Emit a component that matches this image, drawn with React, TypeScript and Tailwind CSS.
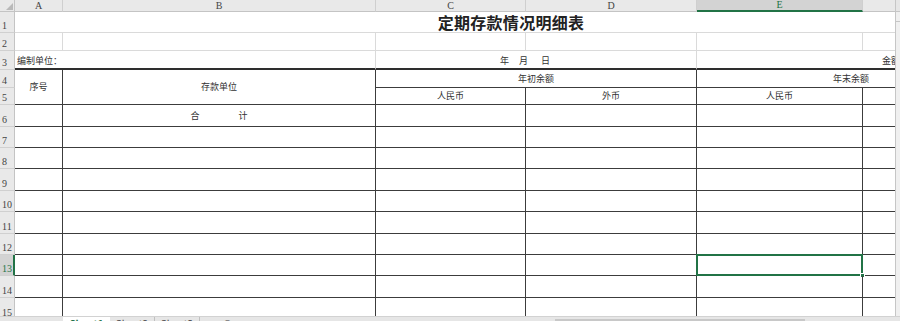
import type { ReactNode } from 'react'

const rowNums = Array.from({ length: 15 }, (_, i) => i + 1)

function RowHead({ n }: { n: number }) {
  const active = n === 13
  return (
    <div
      className={`flex items-end pl-[2px] pb-[1px] text-[10px] leading-none border-b border-b-[#d0d0d0] ${
        active
          ? 'bg-[#d3d3d3] text-[#217346] border-r-2 border-r-[#217346]'
          : 'bg-[#e9e9e9] text-[#444] border-r border-r-[#c4c4c4]'
      }`}
      style={{ fontFamily: '"Liberation Serif", serif' }}
    >
      {n}
    </div>
  )
}

function Cell({ className = '', children }: { className?: string; children?: ReactNode }) {
  return (
    <div className={`flex items-center min-w-0 overflow-hidden whitespace-nowrap text-[9px] text-[#333] ${className}`}>
      {children}
    </div>
  )
}

// black table border / light gridline
const KR = 'border-r border-r-[#3c3c3c]'
const KB = 'border-b border-b-[#3c3c3c]'
const GR = 'border-r border-r-[#dadada]'
const GB = 'border-b border-b-[#dadada]'

function ColHead({ label, active, last }: { label: string; active?: boolean; last?: boolean }) {
  return (
    <div
      className={`flex items-center justify-center text-[10px] leading-none ${last ? '' : 'border-r border-r-[#cfcfcf]'} ${
        active
          ? 'bg-[#d3d3d3] text-[#217346] border-b-2 border-b-[#217346]'
          : 'bg-[#e9e9e9] text-[#444] border-b border-b-[#c4c4c4]'
      }`}
      style={{ fontFamily: '"Liberation Serif", serif' }}
    >
      {label}
    </div>
  )
}

export default function App() {
  return (
    <div
      className="w-[900px] h-[321px] overflow-hidden bg-white flex flex-col"
      style={{ fontFamily: '"Noto Sans CJK SC", "Noto Sans", sans-serif' }}
    >
      <div className="h-[316px] flex overflow-hidden shrink-0">
        <div className="w-[895px] grid grid-cols-[15px_48px_313px_150px_171px_166px_32px] grid-rows-[12px_21px_18px_19px_18px_17px_22px_21px_21px_22px_21px_22px_21px_21px_22px_22px]">
          {/* column headers */}
          <div className="relative bg-[#e9e9e9] border-r border-r-[#c4c4c4] border-b border-b-[#c4c4c4]">
            <svg className="absolute right-[1px] bottom-[1px]" width="7" height="7" viewBox="0 0 7 7">
              <path d="M7 0 L7 7 L0 7 Z" fill="#b9b9b9" />
            </svg>
          </div>
          <ColHead label="A" />
          <ColHead label="B" />
          <ColHead label="C" />
          <ColHead label="D" />
          <ColHead label="E" active />
          <ColHead label="" last />

          {/* row 1 */}
          <RowHead n={1} />
          <div className={`col-span-6 flex items-center justify-center pl-[112px] ${GB}`}>
            <span className="text-[16px] leading-[20px] font-bold text-[#222] tracking-[0.3px] whitespace-nowrap">定期存款情况明细表</span>
          </div>

          {/* row 2 */}
          <RowHead n={2} />
          <Cell className={`${GR} ${GB}`} />
          <Cell className={`${GR} ${GB}`} />
          <Cell className={`${GR} ${GB}`} />
          <Cell className={`${GR} ${GB}`} />
          <Cell className={`${GR} ${GB}`} />
          <Cell className={GB} />

          {/* row 3 */}
          <RowHead n={3} />
          <Cell className={`col-span-2 pl-[2px] pt-[3px] ${GR} border-b-2 border-b-[#2e2e2e]`}>编制单位：</Cell>
          <Cell className={`col-span-2 pl-[124px] pt-[3px] gap-[10px] ${GR} border-b-2 border-b-[#2e2e2e]`}>
            <span>年</span>
            <span>月</span>
            <span className="ml-[3px]">日</span>
          </Cell>
          <Cell className="col-span-2 pl-[185px] pt-[3px] border-b-2 border-b-[#2e2e2e]">金额单位：元</Cell>

          {/* rows 4-5 header */}
          <RowHead n={4} />
          <Cell className={`row-span-2 justify-center ${KR} ${KB}`}>序号</Cell>
          <Cell className={`row-span-2 justify-center ${KR} ${KB}`}>存款单位</Cell>
          <Cell className={`col-span-2 justify-center ${KR} ${KB}`}>年初余额</Cell>
          <Cell className={`col-span-2 pl-[136px] ${KB}`}>年末余额</Cell>

          <RowHead n={5} />
          <Cell className={`justify-center ${KR} ${KB}`}>人民币</Cell>
          <Cell className={`justify-center ${KR} ${KB}`}>外币</Cell>
          <Cell className={`justify-center ${KR} ${KB}`}>人民币</Cell>
          <Cell className={KB} />

          {/* rows 6-15 */}
          {rowNums.slice(5).map((n) => (
            <div key={n} className="contents">
              <RowHead n={n} />
              <Cell className={`${KR} ${KB}`} />
              <Cell className={`justify-center ${KR} ${KB}`}>
                {n === 6 && (
                  <span className="flex gap-[39px]">
                    <span>合</span>
                    <span>计</span>
                  </span>
                )}
              </Cell>
              <Cell className={`${KR} ${KB}`} />
              <Cell className={`${KR} ${KB}`} />
              <div className={`relative ${KR} ${KB}`}>
                {n === 13 && (
                  <>
                    <div className="absolute -left-[1px] -top-[1px] -right-[1px] -bottom-[1px] border-2 border-[#217346]" />
                    <div className="absolute -right-[3px] -bottom-[3px] w-[5px] h-[5px] bg-[#217346] border border-white" />
                  </>
                )}
              </div>
              <Cell className={KB} />
            </div>
          ))}
        </div>

        {/* vertical scrollbar edge */}
        <div className="w-[5px] bg-[#f0f0f0] border-l border-l-[#c6c6c6] flex flex-col">
          <div className="h-[12px] bg-[#e6e6e6] border-b border-b-[#c6c6c6]" />
          <div className="h-[10px] border-b border-b-[#c6c6c6]" />
        </div>
      </div>

      {/* sheet tabs bar */}
      <div className="flex-1 flex bg-[#e6e6e6] border-t border-t-[#d2d2d2] text-[10px] leading-none">
        <div className="w-[63px]" />
        <div className="w-[47px] h-[22px] bg-white text-[#217346] font-bold flex justify-center pt-[2px]">Sheet1</div>
        <div className="w-[45px] text-[#444] border-r border-r-[#c0c0c0] flex justify-center pt-[2px]">Sheet2</div>
        <div className="w-[45px] text-[#444] border-r border-r-[#c0c0c0] flex justify-center pt-[2px]">Sheet3</div>
        <div className="w-[55px] flex justify-center pt-[2px] text-[#777]">⊕</div>
        <div className="w-[300px]" />
        <div className="w-[250px] h-[10px] bg-[#c8c8c8] mt-[2px]" />
      </div>
    </div>
  )
}
